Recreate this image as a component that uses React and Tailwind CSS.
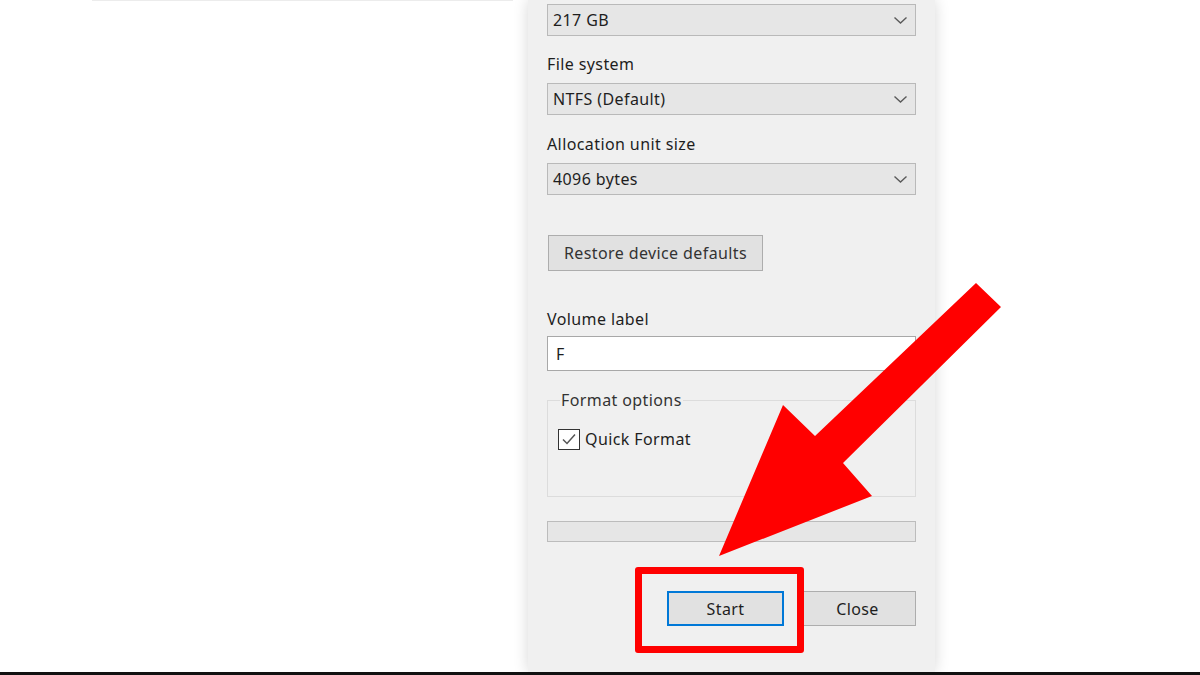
import React from 'react';

function Chevron() {
    return (
        <svg width="15" height="9" viewBox="0 0 15 9" fill="none">
            <path d="M1.5 1.5 L7.5 7 L13.5 1.5" stroke="#5a5a5a" strokeWidth="1.4" />
        </svg>
    );
}

function Combo({ value, className = '' }) {
    return (
        <div className={`flex h-[32px] items-center justify-between border border-[#b9b9b9] bg-[#e6e6e6] pl-[5px] pr-[7px] ${className}`}>
            <span>{value}</span>
            <Chevron />
        </div>
    );
}

function Label({ children, className = '' }) {
    return <div className={`h-[20px] leading-[20px] ${className}`}>{children}</div>;
}

export default function App() {
    return (
        <div
            className="relative flex h-[675px] w-[1200px] flex-col overflow-hidden bg-white text-[16px] tracking-[0.4px] text-[#1e1e1e]"
            style={{ fontFamily: '"Noto Sans", "Open Sans", sans-serif' }}
        >
            <div className="flex h-[672px]">
                {/* empty page area left of the dialog */}
                <div className="w-[528px]">
                    <div className="ml-[92px] h-px w-[421px] bg-[#ececec]" />
                </div>

                {/* format dialog */}
                <div className="flex w-[407px] flex-col bg-[#f0f0f0] px-[19px] pt-[4px] shadow-[0_0_14px_rgba(0,0,0,0.16)]">
                    <Combo value="217 GB" />
                    <Label className="mt-[18px]">File system</Label>
                    <Combo value="NTFS (Default)" className="mt-[9px]" />
                    <Label className="mt-[19px]">Allocation unit size</Label>
                    <Combo value="4096 bytes" className="mt-[9px]" />

                    <button className="mt-[40px] ml-px h-[36px] w-[215px] border border-[#adadad] bg-[#e1e1e1] tracking-[0.4px] text-[#333]">
                        Restore device defaults
                    </button>

                    <Label className="mt-[38px]">Volume label</Label>
                    <div className="mt-[7px] flex h-[35px] items-center border border-[#a8a8a8] bg-white pl-[8px]">F</div>

                    <fieldset className="mt-[19px] h-[107px] border border-[#dcdcdc] pl-[10px]">
                        <legend className="ml-[2px] px-[1px] leading-[20px] text-[#333]">Format options</legend>
                        <label className="mt-[17px] flex items-center gap-[5px]">
                            <span className="flex h-[21px] w-[22px] items-center justify-center border border-[#333] bg-white">
                                <svg width="16" height="14" viewBox="0 0 16 14" fill="none">
                                    <path d="M2 7.5 L6 11.5 L14 2.5" stroke="#555" strokeWidth="1.5" />
                                </svg>
                            </span>
                            <span>Quick Format</span>
                        </label>
                    </fieldset>

                    <div className="mt-[24px] h-[21px] border border-[#bcbcbc] bg-[#e6e6e6]" />

                    <div className="mt-[49px] flex justify-end gap-[15px]">
                        <button className="h-[35px] w-[117px] border-2 border-[#0078d7] bg-[#e1e1e1] tracking-[0.4px]">Start</button>
                        <button className="h-[35px] w-[117px] border border-[#adadad] bg-[#e1e1e1] tracking-[0.4px]">Close</button>
                    </div>
                </div>

                <div className="flex-1" />
            </div>
            <div className="h-[3px] bg-[#111]" />

            {/* red highlight box around Start */}
            <div className="absolute left-[635px] top-[567px] h-[86px] w-[169px] rounded-[3px] border-[7px] border-[#ff0000]" />

            {/* red arrow */}
            <svg className="absolute left-0 top-0" width="1200" height="675" viewBox="0 0 1200 675">
                <polygon
                    points="976,283 1001,307 843,463 872,496 719,556 783,405 815,436"
                    fill="#ff0000"
                />
            </svg>
        </div>
    );
}
